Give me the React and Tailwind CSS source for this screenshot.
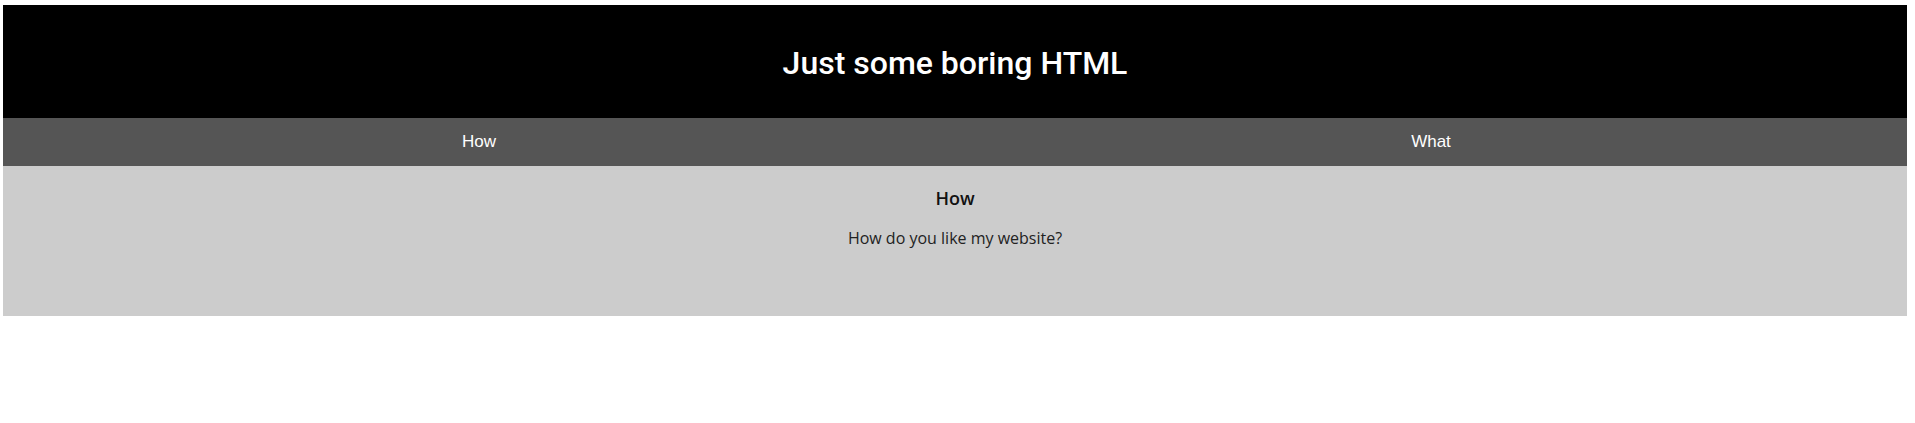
export default function App() {
  return (
    <div className="min-h-[423px] bg-white pt-[5px] pl-[3px] pr-[8px]">
      <header className="flex h-[113px] items-center justify-center bg-black">
        <h1 className="pt-[2px] font-['Roboto',sans-serif] text-[32px] font-medium text-white">Just some boring HTML</h1>
      </header>
      <nav className="grid h-[48px] grid-cols-2 bg-[#555555] font-['Liberation_Sans',Arial,sans-serif] text-[17px] text-white">
        <a className="flex items-center justify-center pb-[1px]">How</a>
        <a className="flex items-center justify-center pb-[1px]">What</a>
      </nav>
      <section className="h-[150px] bg-[#cccccc] pt-[19px] text-center font-['Open_Sans',sans-serif]">
        <h2 className="text-[18px] font-semibold text-[#111]">How</h2>
        <p className="mt-[14px] text-[16px] text-[#222]">How do you like my website?</p>
      </section>
    </div>
  );
}
